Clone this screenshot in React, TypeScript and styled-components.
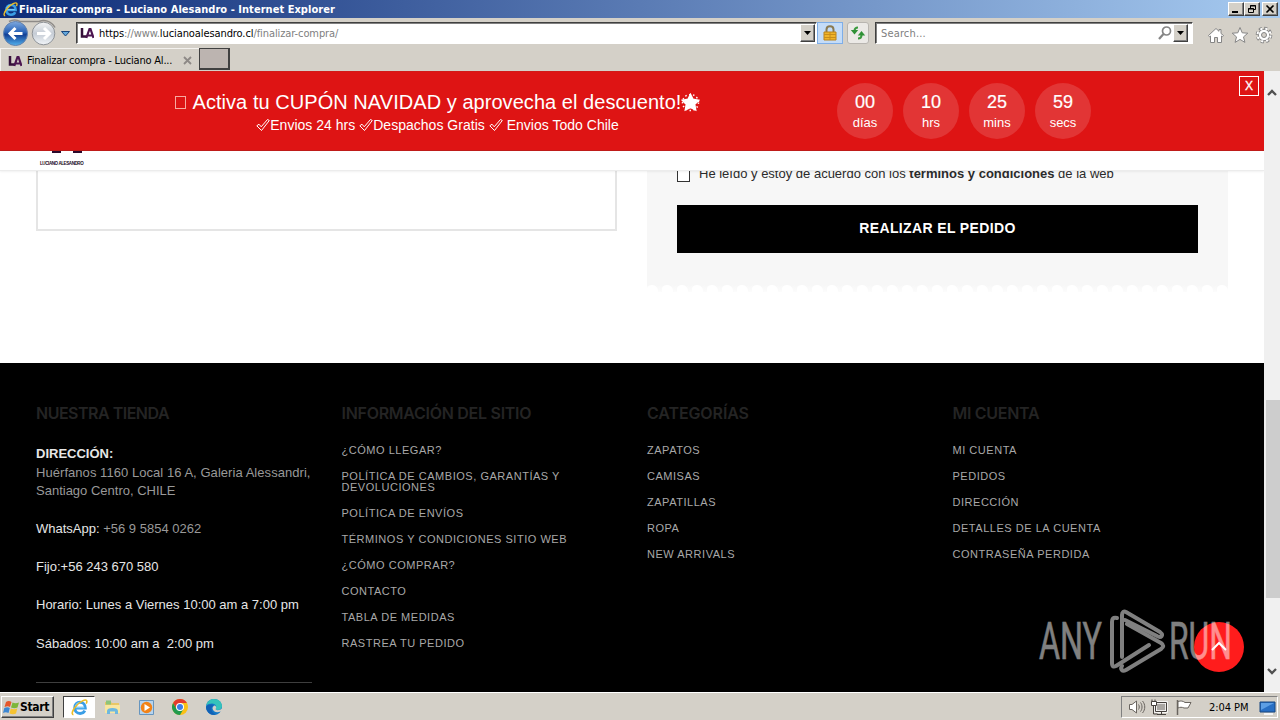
import type { ReactNode } from 'react';
import styled, { createGlobalStyle, css } from 'styled-components';

const GlobalStyle = createGlobalStyle`
  * {
    box-sizing: border-box;
  }

  body {
    margin: 0;
    overflow: hidden;
    font-family: 'Liberation Sans', Arial, sans-serif;
  }
`;

const systemFont = css`
  font-family: 'DejaVu Sans Condensed', 'DejaVu Sans', sans-serif;
  font-stretch: condensed;
  font-size: 11px;
`;

const Screen = styled.div`
  width: 1280px;
  height: 720px;
  display: flex;
  flex-direction: column;
  overflow: hidden;
  background: #d4d0c8;
`;

// Browser window
const TitleBar = styled.div`
  height: 18px;
  flex: none;
  display: flex;
  align-items: center;
  padding: 0 2px 0 3px;
  background: linear-gradient(90deg, #0e2c78, #a6caf0);
`;

const WindowTitle = styled.div`
  ${systemFont}
  flex: 1;
  margin-left: 1px;
  color: #fff;
  font-weight: bold;
  letter-spacing: 0.04px;
  white-space: nowrap;
`;

const raised = css`
  background: #d4d0c8;
  border: 1px solid;
  border-color: #fff #404040 #404040 #fff;
  box-shadow: inset -1px -1px 0 #808080;
`;

const WindowButton = styled.div<{ $gap?: boolean }>`
  ${raised}
  width: 16px;
  height: 14px;
  margin-left: ${({ $gap }) => ($gap ? 2 : 0)}px;
  display: flex;
  align-items: center;
  justify-content: center;
`;

const NavBar = styled.div`
  height: 30px;
  flex: none;
  display: flex;
  align-items: center;
  padding: 0 7px 0 2px;
`;

const NavHistory = styled.div`
  width: 74px;
  flex: none;
  display: flex;
`;

const Field = styled.div<{ $width: number; $offset?: number }>`
  ${systemFont}
  width: ${({ $width }) => $width}px;
  height: 22px;
  margin-left: ${({ $offset }) => $offset ?? 0}px;
  display: flex;
  align-items: center;
  padding-left: 3px;
  background: #fff;
  border: 1px solid;
  border-color: #404040 #fff #fff #404040;
  box-shadow: inset 1px 1px 0 #808080;
  color: #808080;
  white-space: nowrap;
`;

const FieldText = styled.div<{ $spacing?: number; $indent?: number }>`
  flex: 1;
  margin: 1px 0 0 ${({ $indent }) => $indent ?? 0}px;
  letter-spacing: ${({ $spacing }) => $spacing ?? 0}px;

  b {
    color: #000;
    font-weight: normal;
  }
`;

const DropButton = styled.div<{ $inset?: number }>`
  ${raised}
  width: 15px;
  height: 18px;
  margin-right: ${({ $inset }) => $inset ?? 1}px;
  display: flex;
  align-items: center;
  justify-content: center;
`;

const ToolButton = styled.div<{ $active?: boolean }>`
  width: ${({ $active }) => ($active ? 26 : 22)}px;
  height: 22px;
  margin-left: ${({ $active }) => ($active ? 0 : 4)}px;
  display: flex;
  align-items: center;
  justify-content: center;
  background: ${({ $active }) => ($active ? '#c4dcf8' : '#ebe9e6')};
  border: 1px solid ${({ $active }) => ($active ? '#7eaee8' : '#b8b5b0')};
  border-radius: ${({ $active }) => ($active ? 0 : 3)}px;
`;

const ToolIcons = styled.div`
  margin: 4px 0 0 auto;
  display: flex;
  gap: 6px;
`;

const TabBar = styled.div`
  height: 23px;
  flex: none;
  display: flex;
`;

const Tab = styled.div`
  ${systemFont}
  width: 199px;
  display: flex;
  align-items: center;
  padding: 1px 7px 0 7px;
  border-left: 1px solid #f4f2ef;
  border-top: 1px solid #f4f2ef;
  white-space: nowrap;

  span {
    margin-left: 5px;
    flex: 1;
    letter-spacing: -0.2px;
  }
`;

const NewTab = styled.div`
  width: 31px;
  height: 22px;
  background: #bcb4b0;
  border: 1px solid #404040;
  border-right-width: 2px;
  border-bottom-width: 2px;
`;

const BrowserBody = styled.div`
  flex: 1;
  min-height: 0;
  display: flex;
`;

const Scrollbar = styled.div`
  width: 16px;
  display: flex;
  flex-direction: column;
  align-items: center;
  padding: 18px 0 17px;
  background: #f0f0f0;
`;

const ScrollThumb = styled.div`
  width: 14px;
  height: 198px;
  margin: 304px 0 auto 1px;
  background: #cdcdcd;
`;

// Shop page
const Page = styled.div`
  position: relative;
  width: 1264px;
  display: flex;
  flex-direction: column;
  background: #fff;
  overflow: hidden;
`;

const Banner = styled.div`
  height: 80px;
  flex: none;
  display: flex;
  align-items: flex-start;
  background: #de1414;
  border-top: 1px solid #d21a18;
  border-bottom: 1px solid #c01c1a;
  color: #fff;
`;

const Promo = styled.div`
  width: 837px;
  padding: 18px 0 0 38px;
  display: flex;
  flex-direction: column;
  align-items: center;
  white-space: nowrap;
`;

const PromoTitle = styled.div`
  height: 24px;
  display: flex;
  align-items: center;
  font-size: 20px;
  letter-spacing: 0.05px;
`;

const MissingGlyph = styled.i`
  width: 11px;
  height: 13px;
  margin: 1px 7px 0 0;
  border: 1px solid #f7a9a0;
`;

const PromoText = styled.div`
  height: 20px;
  margin-top: 1px;
  display: flex;
  align-items: center;
  font-size: 14px;
  letter-spacing: 0.02px;
  white-space: pre;
`;

const Countdown = styled.div`
  display: flex;
  gap: 10px;
  margin-top: 11px;
`;

const CountdownItem = styled.div`
  width: 56px;
  height: 56px;
  display: flex;
  flex-direction: column;
  align-items: center;
  padding-top: 9px;
  border-radius: 50%;
  background: #e23535;
  font-size: 13px;
  line-height: 21px;

  b {
    font-size: 18px;
    line-height: 20px;
    font-weight: normal;
    -webkit-text-stroke: 0.2px #fff;
  }
`;

const BannerClose = styled.div`
  width: 20px;
  height: 20px;
  margin: 4px 5px 0 auto;
  border: 1px solid #fff;
  font-size: 12px;
  line-height: 19px;
  text-align: center;
  -webkit-text-stroke: 0.3px #fff;
`;

const SiteHeader = styled.div`
  height: 20px;
  flex: none;
  padding-left: 40px;
  background: #fff;
  border-bottom: 1px solid #ececec;
  box-shadow: 0 1px 2px rgba(0, 0, 0, 0.06);
  z-index: 1;
`;

const LogoMark = styled.div`
  height: 3px;
  display: flex;
  gap: 12px;
  padding-left: 12px;

  i {
    width: 9px;
    height: 2px;
    background: #2b0a2c;
  }
`;

const LogoName = styled.div`
  margin-top: 7px;
  font-size: 4.5px;
  line-height: 6px;
  font-weight: bold;
  letter-spacing: -0.4px;
  color: #1d0a1e;
  white-space: nowrap;
`;

const Checkout = styled.div`
  height: 192px;
  flex: none;
  display: flex;
  align-items: flex-start;
  gap: 30px;
  padding: 0 36px;
`;

const NotesBox = styled.div`
  width: 581px;
  height: 60px;
  border: solid #e5e5e5;
  border-width: 0 2px 2px;
`;

// The lower edge is cut like a torn receipt
const OrderCard = styled.div`
  width: 581px;
  height: 122px;
  padding: 0 30px;
  background:
    radial-gradient(circle at 5px 6px, #fff 5.5px, transparent 6.500px) 0 114px / 15px 8px repeat-x,
    linear-gradient(#f7f7f7, #fcfcfc) 0 114px / 100% 7px no-repeat,
    linear-gradient(#f7f7f7, #f7f7f7) 0 0 / 100% 114px no-repeat;
`;

const Terms = styled.label`
  height: 34px;
  display: flex;
  margin-top: -6px;
  font-size: 13px;
  line-height: 17px;
  color: #2b2b2b;
  white-space: pre;

  i {
    width: 13px;
    height: 13px;
    margin: 4px 9px 0 0;
    border: 1px solid #333;
    background: #fff;
  }
`;

const OrderButton = styled.button`
  width: 521px;
  height: 48px;
  margin-top: 6px;
  padding: 0 0 2px;
  border: 0;
  background: #000;
  color: #fff;
  font: bold 14px 'Liberation Sans', Arial, sans-serif;
  letter-spacing: 0.36px;
`;

const Footer = styled.footer`
  flex: 1;
  display: grid;
  grid-template-columns: repeat(4, 1fr);
  gap: 30px;
  padding: 40px 36px 0;
  background: #000;
`;

const FooterTitle = styled.h5<{ $spacing: number }>`
  margin: 0 0 28px;
  font: 600 16px/20px Inter, 'Open Sans', sans-serif;
  letter-spacing: ${({ $spacing }) => $spacing}px;
  color: #242424;
  white-space: nowrap;
`;

const FooterLink = styled.a`
  display: block;
  margin-bottom: 15px;
  font-size: 11px;
  line-height: 11px;
  letter-spacing: 0.53px;
  color: #a8a8a8;
`;

const FooterLinks = styled.div`
  margin-top: -6px;
`;

const Contact = styled.div`
  height: 239px;
  margin-top: -7px;
  border-bottom: 1px solid #3e3e3e;
  font-size: 13px;
  color: #e6e6e6;
  white-space: pre;

  span {
    color: #999;
  }
`;

const ContactLine = styled.div<{ $height: number; $spacing?: number }>`
  height: ${({ $height }) => $height}px;
  line-height: 19px;
  letter-spacing: ${({ $spacing }) => $spacing ?? 0}px;
`;

const BackToTop = styled.div`
  position: absolute;
  left: 1194px;
  top: 551px;
  width: 50px;
  height: 50px;
  display: flex;
  align-items: center;
  justify-content: center;
  border-radius: 50%;
  background: #ff1c1c;
`;

const Watermark = styled.svg`
  position: absolute;
  left: 1034px;
  top: 535px;
`;

// Desktop taskbar
const Taskbar = styled.div`
  ${systemFont}
  height: 28px;
  flex: none;
  display: flex;
  align-items: center;
  padding: 1px 2px 0 1px;
  border-top: 1px solid #fff;
  background: #d4d0c8;
`;

const StartButton = styled.div`
  ${raised}
  width: 53px;
  height: 22px;
  display: flex;
  align-items: center;
  gap: 0;
  padding-left: 1px;
  font-weight: bold;
  font-size: 12px;
  letter-spacing: -0.3px;
`;

const TaskItem = styled.div<{ $active?: boolean }>`
  width: ${({ $active }) => ($active ? 32 : 34)}px;
  height: 22px;
  margin-left: ${({ $active }) => ($active ? 9 : 0)}px;
  display: flex;
  align-items: center;
  justify-content: center;
  ${({ $active }) =>
    $active &&
    css`
      background: #fff;
      border: 1px solid;
      border-color: #404040 #fff #fff #404040;
    `}
`;

const Tray = styled.div`
  width: 157px;
  height: 22px;
  margin-left: auto;
  display: flex;
  align-items: center;
  padding-left: 6px;
  border: 1px solid;
  border-color: #808080 #fff #fff #808080;

  span {
    margin: 0 10px 0 15px;
    letter-spacing: -0.05px;
    white-space: nowrap;
  }
`;

interface IconProps {
  size: number;
  height?: number;
  children: ReactNode;
}

function Icon({ size, height, children }: IconProps) {
  return (
    <svg width={size} height={height ?? size} viewBox={`0 0 ${size} ${height ?? size}`} fill="none">
      {children}
    </svg>
  );
}

function ExplorerIcon({ size = 16 }: { size?: number }) {
  return (
    <svg width={size} height={size} viewBox="0 0 16 16" fill="none">
      <path d="M4.2 8.6h9.3c0-3.4-2-5.5-5-5.5s-5 2.1-5 5.2 2 5.3 5 5.3c2.200 0 3.700-.9 4.500-2.600" stroke="#3a9ee6" strokeWidth="2.700" />
      <path d="M4.500 8.200h8M4 6.500c.8-2 2.200-3 4.200-3" stroke="#9addfb" strokeWidth=".9" />
      <path d="M2.300 14.800C.2 14.500 1 10.800 4.800 6.600 8.800 2.200 13.600-.1 14.700 1.500c.5.800.2 1.800-.4 2.900" stroke="#edbd27" strokeWidth="1.500" />
    </svg>
  );
}

function SiteIcon() {
  return (
    <Icon size={14}>
      <path d="M2 2v8.500h5" stroke="#351039" strokeWidth="2.500" />
      <path d="M6.300 12 9.500 3h1l3 9M7.500 9.500h5" stroke="#4c1550" strokeWidth="2.200" />
    </Icon>
  );
}

function DropArrow() {
  return (
    <Icon size={7} height={4}>
      <path d="M0 0h7L3.500 4z" fill="#000" />
    </Icon>
  );
}

function CheckIcon() {
  return (
    <Icon size={14}>
      <path d="M.8 7.800 3 6.200l2.200 2.600L11.500 1.500l1.800 1L5.500 12.500z" stroke="#fff" strokeWidth="1" />
    </Icon>
  );
}

function HistoryButtons() {
  return (
    <Icon size={74} height={30}>
      <defs>
        <linearGradient id="back" x1="0" y1="0" x2="0" y2="1">
          <stop stopColor="#7fa9df" />
          <stop offset=".45" stopColor="#2862b7" />
          <stop offset=".55" stopColor="#123f94" />
          <stop offset="1" stopColor="#53b1ee" />
        </linearGradient>
        <linearGradient id="forward" x1="0" y1="0" x2="0" y2="1">
          <stop stopColor="#f5f5f5" />
          <stop offset=".5" stopColor="#c5ccd5" />
          <stop offset="1" stopColor="#f2f5f8" />
        </linearGradient>
      </defs>
      <path d="M7 3.500C11 1.500 15 1.800 18 3.500h19c5-2 12-1 16 6" stroke="#8e8b88" strokeWidth="1.500" />
      <circle cx="13.500" cy="15.500" r="12" fill="url(#back)" stroke="#6181ae" />
      <path d="M20.500 15.500H8.500M13.500 10 8 15.500l5.500 5.500" stroke="#fff" strokeWidth="3" />
      <circle cx="41.500" cy="15.500" r="11.300" fill="url(#forward)" stroke="#8f9398" />
      <path d="M35 15.500h12M42 10l5.500 5.500-5.500 5.500" stroke="#fff" strokeWidth="3" />
      <path d="M59.500 13.500h8l-4 4.500z" fill="#64a8dc" stroke="#17457c" />
    </Icon>
  );
}

function BrowserChrome() {
  return (
    <>
      <TitleBar>
        <ExplorerIcon size={15} />
        <WindowTitle>Finalizar compra - Luciano Alesandro - Internet Explorer</WindowTitle>
        <WindowButton>
          <Icon size={10}><path d="M1 8h6" stroke="#000" strokeWidth="2" /></Icon>
        </WindowButton>
        <WindowButton>
          <Icon size={10}>
            <path d="M3.500 4V1.500h5v4H7M3 2h6M1.500 4.500h5v4h-5zM1 5h6" stroke="#000" />
          </Icon>
        </WindowButton>
        <WindowButton $gap>
          <Icon size={10}><path d="m1.500 1.500 7 7m0-7-7 7" stroke="#000" strokeWidth="1.600" /></Icon>
        </WindowButton>
      </TitleBar>
      <NavBar>
        <NavHistory><HistoryButtons /></NavHistory>
        <Field $width={741}>
          <SiteIcon />
          <FieldText $spacing={-0.09} $indent={5}>
            <b>https</b>://www.<b>lucianoalesandro.cl</b>/finalizar-compra/
          </FieldText>
          <DropButton><DropArrow /></DropButton>
        </Field>
        <ToolButton $active>
          <Icon size={16}>
            <path d="M4.500 8V4.500C4.500 0 11.500 0 11.500 4.500V8" stroke="#8a7a52" strokeWidth="2" />
            <path d="M2 7h12v8H2z" fill="#f0b429" stroke="#b9821a" />
            <path d="M2 9.500h12M2 12.500h12M8 7v8" stroke="#c88e1b" />
          </Icon>
        </ToolButton>
        <ToolButton>
          <Icon size={16}>
            <path d="M8 2.500C5.500 2.500 4.500 3.500 4.500 6" stroke="#3a9a3e" strokeWidth="2" />
            <path d="M.8 5h7.400L4.500 9.500z" fill="#2f9136" />
            <path d="M8 13.500c2.500 0 3.500-1 3.500-3.500" stroke="#3a9a3e" strokeWidth="2" />
            <path d="M7.800 10.500h7.400L11.500 6z" fill="#2f9136" />
          </Icon>
        </ToolButton>
        <Field $width={318} $offset={6}>
          <FieldText $spacing={0.15} $indent={2}>Search...</FieldText>
          <Icon size={16}>
            <circle cx="9.500" cy="6" r="4" stroke="#858585" strokeWidth="1.700" />
            <path d="m6.500 9-4.500 5" stroke="#858585" strokeWidth="2.200" />
          </Icon>
          <DropButton $inset={4}><DropArrow /></DropButton>
        </Field>
        <ToolIcons>
          <Icon size={18}>
            <path d="m1.500 9.500 7.500-7 3 2.800V3.500h2v4l2.500 2-1 1.200L14.500 10v6.500h-4v-5h-3v5h-4V10l-1 .800z" fill="#fff" stroke="#858585" />
          </Icon>
          <Icon size={18}>
            <path d="m9 1.500 2.200 5.300 5.600.400-4.300 3.700 1.400 5.500L9 13.400l-4.900 3 1.400-5.500-4.300-3.700 5.600-.400z" fill="#fff" stroke="#858585" />
          </Icon>
          <Icon size={18}>
            <circle cx="9" cy="9" r="6.800" stroke="#858585" strokeWidth="3" strokeDasharray="3.100 2.240" />
            <circle cx="9" cy="9" r="5.700" fill="#fff" stroke="#858585" />
            <circle cx="9" cy="9" r="6.500" stroke="#fff" strokeWidth="2" strokeDasharray="2.100 3.005" strokeDashoffset="-.5" />
            <circle cx="9" cy="9" r="2.500" fill="#d4d0c8" stroke="#858585" />
          </Icon>
        </ToolIcons>
      </NavBar>
      <TabBar>
        <Tab>
          <SiteIcon />
          <span>Finalizar compra - Luciano Al...</span>
          <Icon size={9}><path d="m1 1 7 7m0-7L1 8" stroke="#8d8986" strokeWidth="1.800" /></Icon>
        </Tab>
        <NewTab />
      </TabBar>
    </>
  );
}

const countdown = [
  { value: '00', unit: 'días' },
  { value: '10', unit: 'hrs' },
  { value: '25', unit: 'mins' },
  { value: '59', unit: 'secs' },
];

function PromoBanner() {
  return (
    <Banner>
      <Promo>
        <PromoTitle>
          <MissingGlyph />
          Activa tu CUPÓN NAVIDAD y aprovecha el descuento!
          <Icon size={19}>
            <path d="m9.500 2.500 2.200 4.300 5 .8-3.500 3.500.8 5-4.500-2.300L5 16.100l.8-5-3.500-3.500 5-.8z" fill="#fff" stroke="#fff" strokeWidth="2.500" />
            <circle cx="9.500" cy="9.500" r="8" stroke="#fff" strokeWidth="1.500" strokeDasharray="1.500 2.500" />
          </Icon>
        </PromoTitle>
        <PromoText>
          <CheckIcon />
          {'Envios 24 hrs '}
          <CheckIcon />
          {'Despachos Gratis '}
          <CheckIcon />
          {' Envios Todo Chile'}
        </PromoText>
      </Promo>
      <Countdown>
        {countdown.map(({ value, unit }) => (
          <CountdownItem key={unit}>
            <b>{value}</b>
            {unit}
          </CountdownItem>
        ))}
      </Countdown>
      <BannerClose>X</BannerClose>
    </Banner>
  );
}

const linkColumns = [
  {
    title: 'INFORMACIÓN DEL SITIO',
    spacing: -0.28,
    links: [
      '¿CÓMO LLEGAR?',
      'POLÍTICA DE CAMBIOS, GARANTÍAS Y DEVOLUCIONES',
      'POLÍTICA DE ENVÍOS',
      'TÉRMINOS Y CONDICIONES SITIO WEB',
      '¿CÓMO COMPRAR?',
      'CONTACTO',
      'TABLA DE MEDIDAS',
      'RASTREA TU PEDIDO',
    ],
  },
  {
    title: 'CATEGORÍAS',
    spacing: -0.1,
    links: ['ZAPATOS', 'CAMISAS', 'ZAPATILLAS', 'ROPA', 'NEW ARRIVALS'],
  },
  {
    title: 'MI CUENTA',
    spacing: -0.3,
    links: ['MI CUENTA', 'PEDIDOS', 'DIRECCIÓN', 'DETALLES DE LA CUENTA', 'CONTRASEÑA PERDIDA'],
  },
];

function SiteFooter() {
  return (
    <Footer>
      <div>
        <FooterTitle $spacing={-0.5}>NUESTRA TIENDA</FooterTitle>
        <Contact>
          <ContactLine $height={19}><b>DIRECCIÓN:</b></ContactLine>
          <ContactLine $height={18} $spacing={0.05}>
            <span>Huérfanos 1160 Local 16 A, Galeria Alessandri,</span>
          </ContactLine>
          <ContactLine $height={38}><span>Santiago Centro, CHILE</span></ContactLine>
          <ContactLine $height={38}>WhatsApp: <span>+56 9 5854 0262</span></ContactLine>
          <ContactLine $height={38}>Fijo:+56 243 670 580</ContactLine>
          <ContactLine $height={39}>Horario: Lunes a Viernes 10:00 am a 7:00 pm</ContactLine>
          <ContactLine $height={19}>{'Sábados: 10:00 am a  2:00 pm'}</ContactLine>
        </Contact>
      </div>
      {linkColumns.map(({ title, spacing, links }) => (
        <div key={title}>
          <FooterTitle $spacing={spacing}>{title}</FooterTitle>
          <FooterLinks>
            {links.map((link) => (
              <FooterLink key={link}>{link}</FooterLink>
            ))}
          </FooterLinks>
        </div>
      ))}
    </Footer>
  );
}

function AnyRunWatermark() {
  return (
    <Watermark width="220" height="72" viewBox="0 0 220 72" fill="none">
      <g opacity=".5">
        <g fill="#fff" stroke="#fff" strokeWidth=".5" fontFamily="Roboto, sans-serif" fontSize="51">
          <text x="5" y="53" textLength="63" lengthAdjust="spacingAndGlyphs">ANY</text>
          <text x="135" y="53" textLength="63" lengthAdjust="spacingAndGlyphs">RUN</text>
        </g>
        <g stroke="#fff" strokeWidth="4" strokeLinejoin="round" strokeLinecap="round">
          <path d="M83 12c-4-1-5 1-5 4v41c0 4 2 4 4 3l33-21" />
          <path d="M88 51V9c0-3 2-4 4-3l34 20c4 3 1 7-3 4L91 14" />
          <path d="M88 60c-2 3 0 6 4 4l35-21c3-2 3-4 0-6L93 18" />
        </g>
      </g>
    </Watermark>
  );
}

function DesktopTaskbar() {
  return (
    <Taskbar>
      <StartButton>
        <Icon size={17}>
          <path d="M3 3c2-1.500 4-1 5.500 0L7 8C5.500 7 4 7 1.500 8z" fill="#e6572b" />
          <path d="M9.500 3.500c2 1 4 1 6.500 0L14.500 8.500c-2 1-4 1-6.500 0z" fill="#7db63a" />
          <path d="M1.300 9c2-1 4-1 5.500 0L5.500 14c-2-1-3.500-1-5.500 0z" fill="#3c87d3" />
          <path d="M7.800 9.500c2 1 4 1 6.500 0L13 14.500c-2 1-4 1-6.500 0z" fill="#f6c331" />
        </Icon>
        Start
      </StartButton>
      <TaskItem $active><ExplorerIcon size={17} /></TaskItem>
      <TaskItem>
        <Icon size={17}>
          <path d="M1 3h6l1 1h7v10H1z" fill="#e8c765" />
          <path d="M2 1.500h5v4H2z" fill="#8dc47a" />
          <path d="M1 6h15v8H1z" fill="#f8e6a0" />
          <path d="M3 15v-3c0-2 2-3 5.500-3s5.500 1 5.500 3v3h-3v-2.500H6V15z" fill="#6eb8df" />
        </Icon>
      </TaskItem>
      <TaskItem>
        <Icon size={17}>
          <path d="M1.500 1.500h14v14h-14z" fill="#b7d4ee" stroke="#6695bf" />
          <circle cx="8.500" cy="8.500" r="5.700" fill="#f28318" />
          <path d="m6.500 5 5.500 3.500L6.500 12z" fill="#fff" />
        </Icon>
      </TaskItem>
      <TaskItem>
        <Icon size={16}>
          <circle cx="8" cy="8" r="8" fill="#fbc116" />
          <path d="M8 4h6.930A8 8 0 0 0 1.070 4L4.540 10z" fill="#e33b2e" />
          <path d="M1.070 4A8 8 0 0 0 8 16l3.460-6H4.540z" fill="#229a4e" />
          <circle cx="8" cy="8" r="4" fill="#fff" />
          <circle cx="8" cy="8" r="3" fill="#3d7de8" />
        </Icon>
      </TaskItem>
      <TaskItem>
        <Icon size={16}>
          <circle cx="8" cy="8" r="8" fill="#1478c7" />
          <path d="M.3 6.500C1 2.700 4 0 8 0c5 0 8 3.500 8 7 0 2.500-2 4-4.500 4-1.500 0-2.500-.6-1.700-1.700C11 7.500 9.500 4.500 6 4.500c-2.500 0-4.500.7-5.700 2z" fill="#35c2bb" />
          <path d="M10 9.300c-1 1.200.3 1.900 1.800 1.900 1.500 0 3-.6 4.200-1.700l.5 3.500-1.900-.500C11 14 7 13 6.500 9.500c0-1.500.8-2.500 2-3C10 7 10.500 8.300 10 9.300z" fill="#d4d0c8" />
          <path d="M6.500 7C4 9.500 6 14.500 10 15.500c-5 1.500-10-2.500-10-7.500C1.500 5.500 4.500 5 7.500 6z" fill="#1261b5" />
        </Icon>
      </TaskItem>
      <Tray>
        <Icon size={18}>
          <path d="M1.500 6.500H4L8.500 3v12L4 11.500H1.500z" fill="#fff" stroke="#69645f" />
          <path d="M10.500 6.500c1 1.500 1 3.500 0 5M12.500 4.500c2 2.500 2 6.500 0 9M14.500 3c3 3.500 3 8.500 0 12" stroke="#69645f" />
        </Icon>
        <Icon size={24} height={18}>
          <path d="M9.500 4.500h11v9h-11z" fill="#a9a6a2" stroke="#fff" strokeWidth="2.500" />
          <path d="M9.500 4.500h11v9h-11zM11 16.500h9M15.500 14v2M7.500 7v9h4" stroke="#45413d" />
          <path d="M9 1.500v3M6 1.500v3" stroke="#45413d" />
          <path d="M5.500 3.500h5v4h-5z" fill="#fff" stroke="#45413d" />
        </Icon>
        <Icon size={24} height={18}>
          <path d="M7.500 2v15" stroke="#69645f" strokeWidth="1.500" />
          <path d="M8 3.500c3-1 5-.5 7 1h6l-3 5.500h-4c-2-1-4-1-6 0z" fill="#fff" stroke="#69645f" />
        </Icon>
        <span>2:04 PM</span>
        <Icon size={17}>
          <path d="M1 3h15v10H1z" fill="#286fc4" stroke="#174780" />
          <path d="M2 4h13L2 11z" fill="#5d9fe5" />
          <path d="M5 15h9" stroke="#f4f4f4" strokeWidth="2" />
        </Icon>
      </Tray>
    </Taskbar>
  );
}

export default function App() {
  return (
    <Screen>
      <GlobalStyle />
      <BrowserChrome />
      <BrowserBody>
        <Page>
          <PromoBanner />
          <SiteHeader>
            <LogoMark><i /><i /></LogoMark>
            <LogoName>LUCIANO ALESANDRO</LogoName>
          </SiteHeader>
          <Checkout>
            <NotesBox />
            <OrderCard>
              <Terms>
                <i />
                <div>He leído y estoy de acuerdo con los <b>términos y condiciones</b> de la web</div>
              </Terms>
              <OrderButton>REALIZAR EL PEDIDO</OrderButton>
            </OrderCard>
          </Checkout>
          <SiteFooter />
          <BackToTop>
            <Icon size={18}><path d="m2 12 7-7 7 7" stroke="#fff" strokeWidth="2" /></Icon>
          </BackToTop>
          <AnyRunWatermark />
        </Page>
        <Scrollbar>
          <Icon size={10} height={7}><path d="m1 6 4-4 4 4" stroke="#505050" strokeWidth="2.300" /></Icon>
          <ScrollThumb />
          <Icon size={10} height={7}><path d="m1 1 4 4 4-4" stroke="#505050" strokeWidth="2.300" /></Icon>
        </Scrollbar>
      </BrowserBody>
      <DesktopTaskbar />
    </Screen>
  );
}
